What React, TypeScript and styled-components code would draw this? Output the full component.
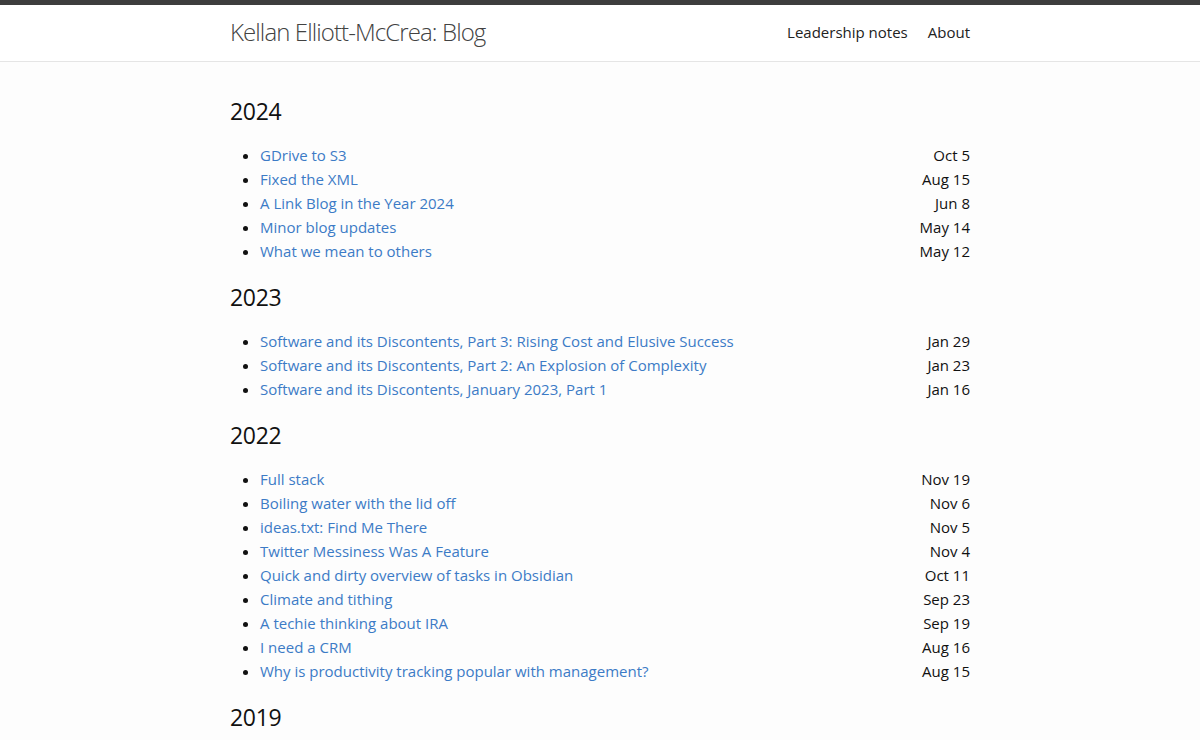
import React from "react";
import styled, { createGlobalStyle } from "styled-components";

const Global = createGlobalStyle`
  html, body { margin: 0; padding: 0; background: #fdfdfd; }
  body { font-family: "Open Sans", "Noto Sans", "Liberation Sans", sans-serif; color: #111; font-size: 16px; }
  * { box-sizing: border-box; }
`;

const Header = styled.header`
  border-top: 5px solid #3d3d3d;
  border-bottom: 1px solid #e5e5e5;
  background: #fff;
`;

const Bar = styled.div`
  width: 740px;
  margin: 0 auto;
  height: 56px;
  display: flex;
  align-items: center;
  justify-content: space-between;
`;

const Title = styled.a`
  font-size: 24px;
  font-weight: 300;
  color: #424242;
  text-decoration: none;
  letter-spacing: -0.9px;
  margin-top: -3px;
`;

const Nav = styled.nav`
  display: flex;
  gap: 20px;
  margin-top: -2px;
`;

const NavLink = styled.a`
  font-size: 15px;
  color: #222;
  text-decoration: none;
`;

const Main = styled.main`
  width: 740px;
  margin: 0 auto;
  padding-top: 33px;
`;

const Year = styled.h2`
  font-size: 23px;
  font-weight: 400;
  margin: 0;
  line-height: 32px;
  letter-spacing: -0.3px;
`;

const List = styled.ul`
  margin: 16px 0 18px;
  padding-left: 30px;
`;

const Item = styled.li`
  line-height: 24px;
  font-size: 15px;
`;

const Row = styled.div`
  display: flex;
  justify-content: space-between;
`;

const PostLink = styled.a`
  color: #3c7bc6;
  text-decoration: none;
`;

const PostDate = styled.span`
  color: #111;
`;

const data: { year: string; posts: [string, string][] }[] = [
  {
    year: "2024",
    posts: [
      ["GDrive to S3", "Oct 5"],
      ["Fixed the XML", "Aug 15"],
      ["A Link Blog in the Year 2024", "Jun 8"],
      ["Minor blog updates", "May 14"],
      ["What we mean to others", "May 12"],
    ],
  },
  {
    year: "2023",
    posts: [
      ["Software and its Discontents, Part 3: Rising Cost and Elusive Success", "Jan 29"],
      ["Software and its Discontents, Part 2: An Explosion of Complexity", "Jan 23"],
      ["Software and its Discontents, January 2023, Part 1", "Jan 16"],
    ],
  },
  {
    year: "2022",
    posts: [
      ["Full stack", "Nov 19"],
      ["Boiling water with the lid off", "Nov 6"],
      ["ideas.txt: Find Me There", "Nov 5"],
      ["Twitter Messiness Was A Feature", "Nov 4"],
      ["Quick and dirty overview of tasks in Obsidian", "Oct 11"],
      ["Climate and tithing", "Sep 23"],
      ["A techie thinking about IRA", "Sep 19"],
      ["I need a CRM", "Aug 16"],
      ["Why is productivity tracking popular with management?", "Aug 15"],
    ],
  },
  {
    year: "2019",
    posts: [],
  },
];

export default function App() {
  return (
    <>
      <Global />
      <Header>
        <Bar>
          <Title href="#">Kellan Elliott-McCrea: Blog</Title>
          <Nav>
            <NavLink href="#">Leadership notes</NavLink>
            <NavLink href="#">About</NavLink>
          </Nav>
        </Bar>
      </Header>
      <Main>
        {data.map((g) => (
          <section key={g.year}>
            <Year>{g.year}</Year>
            {g.posts.length > 0 && (
              <List>
                {g.posts.map(([t, d]) => (
                  <Item key={t}>
                    <Row>
                      <PostLink href="#">{t}</PostLink>
                      <PostDate>{d}</PostDate>
                    </Row>
                  </Item>
                ))}
              </List>
            )}
          </section>
        ))}
      </Main>
    </>
  );
}
